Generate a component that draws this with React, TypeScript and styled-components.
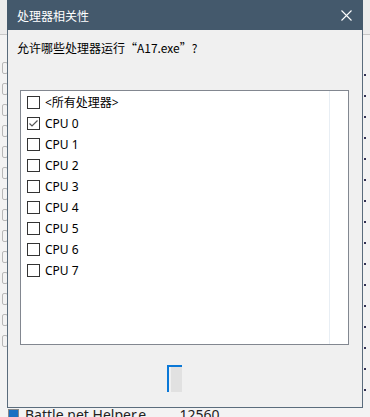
import styled, { createGlobalStyle } from "styled-components";

const cpus = ["<所有处理器>", "CPU 0", "CPU 1", "CPU 2", "CPU 3", "CPU 4", "CPU 5", "CPU 6", "CPU 7"];
const checked = [false, true, false, false, false, false, false, false, false];

const GlobalStyle = createGlobalStyle`
    html, body {
        margin: 0;
        padding: 0;
    }
    body {
        font-family: "Noto Sans", "Noto Sans CJK SC", sans-serif;
        font-size: 12px;
        color: #000000;
    }
`;

const App = () => {
    return (
        <>
            <GlobalStyle />
            <Desktop>
                <BackTop />
                <BackLeft>
                    {Array.from({ length: 14 }).map((_, i) => (
                        <BackRing key={i} />
                    ))}
                </BackLeft>
                <BackRight>
                    {Array.from({ length: 16 }).map((_, i) => (
                        <BackDot key={i} />
                    ))}
                </BackRight>
                <BackTask>
                    <TaskIcon />
                    <span>Battle.net Helper.e...</span>
                    <TaskNum>12560</TaskNum>
                </BackTask>

                <Dialog>
                    <TitleBar>
                        <Title>处理器相关性</Title>
                        <CloseIcon viewBox="0 0 11 11">
                            <path d="M0.5 0.5 L10.5 10.5 M10.5 0.5 L0.5 10.5" />
                        </CloseIcon>
                    </TitleBar>
                    <Body>
                        <Prompt>允许哪些处理器运行“A17.exe”?</Prompt>
                        <ListBox>
                            <List>
                                {cpus.map((name, i) => (
                                    <Row key={name}>
                                        <Check>
                                            {checked[i] && (
                                                <svg viewBox="0 0 11 11" width="11" height="11">
                                                    <path d="M1.5 5.5 L4 8 L9.5 2.5" />
                                                </svg>
                                            )}
                                        </Check>
                                        <RowText>{name}</RowText>
                                    </Row>
                                ))}
                            </List>
                            <Divider />
                        </ListBox>
                        <Footer>
                            <GhostButton />
                        </Footer>
                    </Body>
                </Dialog>
            </Desktop>
        </>
    );
};

const Desktop = styled.div`
    position: relative;
    width: 370px;
    height: 417px;
    overflow: hidden;
    background-color: #f3f3f3;
`;

const BackTop = styled.div`
    position: absolute;
    top: 0;
    left: 0;
    right: 0;
    height: 34px;
    background-color: #ececec;
    border-bottom: 1px solid #c8c8c8;
`;

const BackLeft = styled.div`
    position: absolute;
    top: 62px;
    left: 2px;
    width: 5px;
    display: flex;
    flex-direction: column;
    gap: 9px;
`;

const BackRing = styled.div`
    width: 6px;
    height: 12px;
    border: 1px solid #b8b8b8;
    border-radius: 2px;
    box-sizing: border-box;
`;

const BackRight = styled.div`
    position: absolute;
    top: 74px;
    left: 364px;
    display: flex;
    flex-direction: column;
    gap: 19px;
`;

const BackDot = styled.div`
    width: 2px;
    height: 2px;
    background-color: #333355;
`;

const BackTask = styled.div`
    position: absolute;
    top: 405px;
    left: 8px;
    display: flex;
    align-items: center;
    gap: 6px;
    font-family: "Noto Sans", sans-serif;
    font-size: 14px;
    color: #222222;
    white-space: nowrap;
`;

const TaskIcon = styled.div`
    width: 9px;
    height: 9px;
    background-color: #1a6fc2;
    border: 1px solid #888888;
`;

const TaskNum = styled.span`
    margin-left: 16px;
`;

const Dialog = styled.div`
    position: absolute;
    top: 0;
    left: 7px;
    width: 356px;
    height: 408px;
    box-sizing: border-box;
    border: 1px solid #5a6c7c;
    border-top: 0;
    background-color: #f0f0f0;
    display: flex;
    flex-direction: column;
`;

const TitleBar = styled.div`
    height: 30px;
    margin: 0 -1px;
    background-color: #44596c;
    display: flex;
    align-items: center;
    justify-content: space-between;
    padding: 0 11px 0 10px;
`;

const Title = styled.span`
    color: #ffffff;
    font-size: 12px;
    font-family: "Noto Sans CJK SC", sans-serif;
`;

const CloseIcon = styled.svg`
    width: 11px;
    height: 11px;
    stroke: #ffffff;
    stroke-width: 1.1;
    fill: none;
`;

const Body = styled.div`
    flex: 1;
    display: flex;
    flex-direction: column;
    padding: 9px 13px 0 12px;
`;

const Prompt = styled.div`
    font-family: "Noto Sans CJK SC", sans-serif;
    font-size: 12px;
    line-height: 18px;
    padding-left: -2px;
    margin-left: -3px;
`;

const ListBox = styled.div`
    position: relative;
    margin-top: 33px;
    height: 255px;
    box-sizing: border-box;
    border: 1px solid #828790;
    background-color: #ffffff;
`;

const List = styled.div`
    display: flex;
    flex-direction: column;
    padding: 1px 0 0 6px;
`;

const Row = styled.div`
    height: 21px;
    display: flex;
    align-items: center;
    gap: 5px;
`;

const Check = styled.div`
    width: 13px;
    height: 13px;
    box-sizing: border-box;
    border: 1px solid #333333;
    background-color: #ffffff;
    display: flex;
    align-items: center;
    justify-content: center;

    & svg path {
        stroke: #555555;
        stroke-width: 1.2;
        fill: none;
    }
`;

const RowText = styled.span`
    font-family: "Noto Sans", "Noto Sans CJK SC", sans-serif;
    font-size: 12px;
    line-height: 16px;
`;

const Divider = styled.div`
    position: absolute;
    top: 0;
    bottom: 0;
    left: 308px;
    width: 1px;
    background-color: #e8eef4;
`;

const Footer = styled.div`
    display: flex;
    padding: 20px 0 0 147px;
`;

const GhostButton = styled.div`
    width: 13px;
    height: 27px;
    box-sizing: border-box;
    border-left: 2px solid #0a78d7;
    border-top: 2px solid #0a78d7;
    background: linear-gradient(to right, transparent 2px, #e1e1e1 2px);
    width: 15px;
`;

export default App;
